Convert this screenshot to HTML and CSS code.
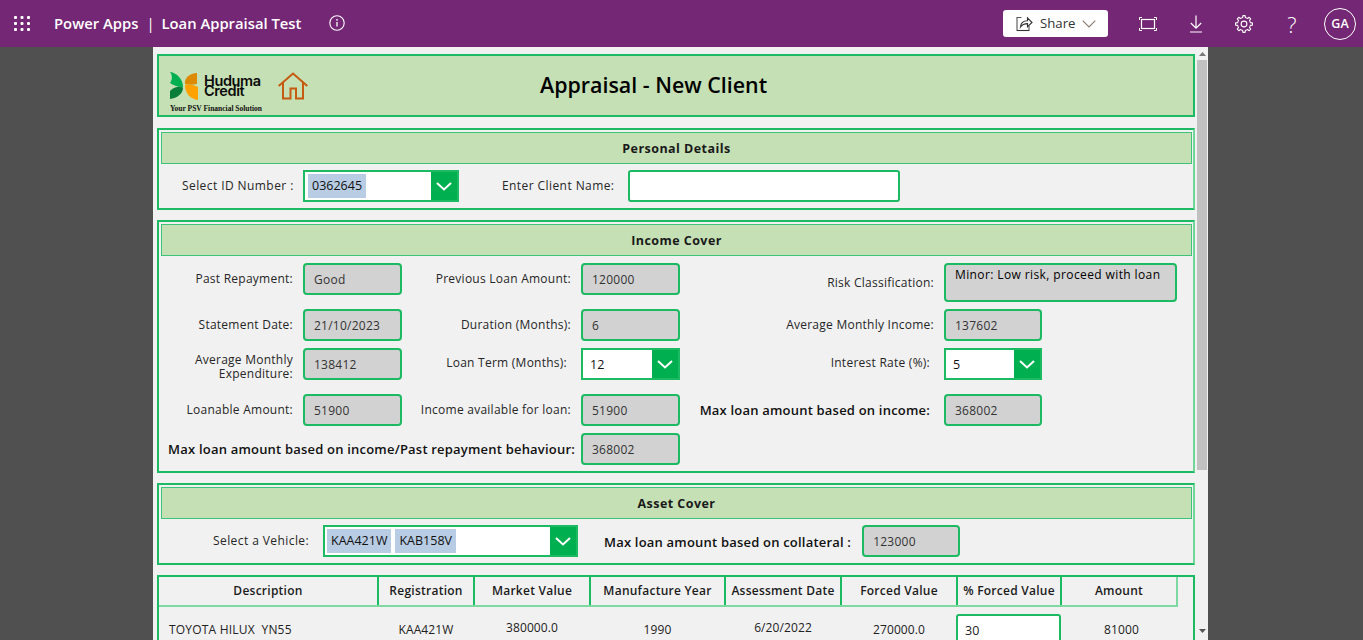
FILE: index.html
```html
<!DOCTYPE html>
<html lang="en">
<head>
<meta charset="utf-8">
<title>Loan Appraisal Test</title>
<link rel="stylesheet" href="styles.css">
</head>
<body>
<header class="topbar">
  <svg class="waffle" width="16" height="15" viewBox="0 0 16 15" fill="#fff"><rect x="0" y="0" width="3" height="3" rx="1"/><rect x="6.5" y="0" width="3" height="3" rx="1"/><rect x="13" y="0" width="3" height="3" rx="1"/><rect x="0" y="6" width="3" height="3" rx="1"/><rect x="6.5" y="6" width="3" height="3" rx="1"/><rect x="13" y="6" width="3" height="3" rx="1"/><rect x="0" y="12" width="3" height="3" rx="1"/><rect x="6.5" y="12" width="3" height="3" rx="1"/><rect x="13" y="12" width="3" height="3" rx="1"/></svg>
  <span class="brand">Power Apps</span>
  <span class="brand sep">|</span>
  <span class="brand">Loan Appraisal Test</span>
  <svg class="info" width="16" height="16" viewBox="0 0 16 16" fill="none" stroke="#fff"><circle cx="8" cy="8" r="7.2" stroke-width="1.1"/><path d="M8 7v4.500" stroke-width="1.3"/><circle cx="8" cy="4.800" r=".9" fill="#fff" stroke="none"/></svg>
  <div class="top-actions">
    <button class="share">
      <svg width="17" height="16" viewBox="0 0 17 16" fill="none" stroke-width="1.1"><path d="M5.500 1.500H1v13h12V10" stroke="#555"/><path d="M1 14.500h12" stroke="#333"/><path d="M4.500 11c.3-4 3-6.200 7-6.200V1.800L16 6.500l-4.500 4.200V7.600c-3 0-5.300 1-7 3.400z" stroke="#333"/></svg>
      <span>Share</span>
      <svg width="14" height="8" viewBox="0 0 14 8" fill="none" stroke="#8a7a70" stroke-width="1.1"><path d="M.7.7 7 7 13.300.7"/></svg>
    </button>
    <svg class="act" width="18" height="14" viewBox="0 0 18 14" fill="none" stroke="#fff"><rect x="2.500" y="2.500" width="13" height="9" stroke-width="1.2"/><path d="M.5 3V.5H3M15 .5h2.500V3M.5 11v2.500H3M15 13.500h2.500V11" stroke-width="1"/></svg>
    <svg class="act" width="14" height="18" viewBox="0 0 14 18" fill="none" stroke="#fff" stroke-width="1.2"><path d="M7 .5v12.500M1.800 8 7 13.200 12.200 8M1 17h12"/></svg>
    <svg class="act act-gear" width="18" height="18" viewBox="0 0 18 18" fill="none" stroke="#fff" stroke-width="1.1" stroke-linejoin="round"><g id="gear-teeth"><path d="M6.550 3.090 7.600 2.600 7.900.6h2.200l.3 2 1.050.49"/><path transform="rotate(45 9 9)" d="M6.550 3.090 7.600 2.600 7.900.6h2.200l.3 2 1.050.49"/><path transform="rotate(90 9 9)" d="M6.550 3.090 7.600 2.600 7.900.6h2.200l.3 2 1.050.49"/><path transform="rotate(135 9 9)" d="M6.550 3.090 7.600 2.600 7.900.6h2.200l.3 2 1.050.49"/><path transform="rotate(180 9 9)" d="M6.550 3.090 7.600 2.600 7.900.6h2.200l.3 2 1.050.49"/><path transform="rotate(225 9 9)" d="M6.550 3.090 7.600 2.600 7.900.6h2.200l.3 2 1.050.49"/><path transform="rotate(270 9 9)" d="M6.550 3.090 7.600 2.600 7.900.6h2.200l.3 2 1.050.49"/><path transform="rotate(315 9 9)" d="M6.550 3.090 7.600 2.600 7.900.6h2.200l.3 2 1.050.49"/></g><circle cx="9" cy="9" r="2.900"/></svg>
    <span class="help">?</span>
    <span class="avatar">GA</span>
  </div>
</header>

<div class="stage">
  <main class="canvas">
    <div class="content">
      <section class="banner">
        <div class="logo">
          <div class="logo-main">
            <svg width="29" height="28" viewBox="0 0 29 28"><path fill="#00b050" d="M0 0C7 1 13 7 13 15 7 15 3 13 0 11 2.500 8 2.500 3 0 0z"/><path fill="#0a7d3a" d="M0 27v-8C4 15 9 14 13 15.500 13 22 7 26 0 27z"/><path fill="#dc8a00" d="M27 1v11c-5 1-9 1-12 0C14 6 20 1 27 1z"/><path fill="#ffa200" d="M15 13c5-1 9 0 13 2v13c-8-1-13-7-13-15z"/></svg>
            <div class="logo-word">Huduma<br>Credit</div>
          </div>
          <div class="logo-tag">Your PSV Financial Solution</div>
        </div>
        <svg class="home" width="30" height="28" viewBox="0 0 30 28" fill="none" stroke="#c55a11" stroke-width="2"><path d="M.7 14 15 1.500 29.300 14M5 10.500V26.500h7.500V16.500h5.500v10h7V10.500"/></svg>
        <h1 class="banner-title">Appraisal - New Client</h1>
      </section>

      <section class="panel panel-personal">
        <div class="band">Personal Details</div>
        <div class="form-row">
          <label class="lbl lbl-id">Select ID Number :</label>
          <div class="combo combo-id"><div class="combo-val"><span class="chip">0362645</span></div><span class="chev"><svg width="16" height="9" viewBox="0 0 16 9" fill="none" stroke="#fff" stroke-width="2"><path d="M1 1l7 6.500L15 1"/></svg></span></div>
          <label class="lbl lbl-name">Enter Client Name:</label>
          <div class="text-input name-input"></div>
        </div>
      </section>

      <section class="panel panel-income">
        <div class="band">Income Cover</div>
        <div class="income-grid">
          <label class="lbl cell-lbl up">Past Repayment:</label>
          <div class="ro up">Good</div>
          <label class="lbl cell-lbl up">Previous Loan Amount:</label>
          <div class="ro up">120000</div>
          <label class="lbl cell-lbl">Risk Classification:</label>
          <div class="ro risk">Minor: Low risk, proceed with loan</div>

          <label class="lbl cell-lbl">Statement Date:</label>
          <div class="ro">21/10/2023</div>
          <label class="lbl cell-lbl">Duration (Months):</label>
          <div class="ro">6</div>
          <label class="lbl cell-lbl">Average Monthly Income:</label>
          <div class="ro narrow">137602</div>

          <label class="lbl cell-lbl two">Average Monthly Expenditure:</label>
          <div class="ro">138412</div>
          <label class="lbl cell-lbl pad-14 raise">Loan Term (Months):</label>
          <div class="combo combo-sm"><div class="combo-val num">12</div><span class="chev"><svg width="16" height="9" viewBox="0 0 16 9" fill="none" stroke="#fff" stroke-width="2"><path d="M1 1l7 6.500L15 1"/></svg></span></div>
          <label class="lbl cell-lbl pad-14 raise">Interest Rate (%):</label>
          <div class="combo combo-sm narrow"><div class="combo-val num">5</div><span class="chev"><svg width="16" height="9" viewBox="0 0 16 9" fill="none" stroke="#fff" stroke-width="2"><path d="M1 1l7 6.500L15 1"/></svg></span></div>

          <label class="lbl cell-lbl low">Loanable Amount:</label>
          <div class="ro low">51900</div>
          <label class="lbl cell-lbl low">Income available for loan:</label>
          <div class="ro low">51900</div>
          <label class="lbl cell-lbl low strong pad-14">Max loan amount based on income:</label>
          <div class="ro low narrow">368002</div>

          <label class="lbl cell-lbl strong wide">Max loan amount based on income/Past repayment behaviour:</label>
          <div class="ro">368002</div>
        </div>
      </section>

      <section class="panel panel-asset">
        <div class="band">Asset Cover</div>
        <div class="form-row">
          <label class="lbl lbl-veh">Select a Vehicle:</label>
          <div class="combo combo-veh"><div class="combo-val"><span class="chip">KAA421W</span><span class="chip">KAB158V</span></div><span class="chev"><svg width="16" height="9" viewBox="0 0 16 9" fill="none" stroke="#fff" stroke-width="2"><path d="M1 1l7 6.500L15 1"/></svg></span></div>
          <label class="lbl strong lbl-coll">Max loan amount based on collateral :</label>
          <div class="ro coll">123000</div>
        </div>
      </section>

      <section class="table">
        <div class="thead">
          <div class="th">Description</div>
          <div class="th">Registration</div>
          <div class="th">Market Value</div>
          <div class="th">Manufacture Year</div>
          <div class="th">Assessment Date</div>
          <div class="th">Forced Value</div>
          <div class="th">% Forced Value</div>
          <div class="th">Amount</div>
        </div>
        <div class="trow">
          <div class="td td-desc">TOYOTA HILUX&nbsp; YN55</div>
          <div class="td">KAA421W</div>
          <div class="td td-up">380000.0</div>
          <div class="td">1990</div>
          <div class="td td-up">6/20/2022</div>
          <div class="td">270000.0</div>
          <div class="td td-input"><div class="text-input pct">30</div></div>
          <div class="td td-last">81000</div>
        </div>
      </section>
    </div>
    <div class="scrollbar">
      <svg class="arrow" width="7" height="4" viewBox="0 0 7 4" fill="#777"><path d="M3.500 0 7 4H0z"/></svg>
      <div class="thumb"></div>
      <svg class="arrow arrow-down" width="7" height="4" viewBox="0 0 7 4" fill="#555"><path d="M3.500 4 7 0H0z"/></svg>
    </div>
  </main>
</div>
</body>
</html>
```
FILE: styles.css
```css
* { box-sizing: border-box; }
html, body { margin: 0; height: 640px; overflow: hidden; }
body { display: flex; flex-direction: column; background: #505050; font-family: "Open Sans", sans-serif; color: #1c1c1c; }

.topbar { flex: 0 0 47px; height: 47px; background: #742774; display: flex; align-items: center; padding-left: 14px; color: #fff; }
.waffle { margin-right: 24px; }
.brand { font-size: 14.800px; font-weight: 600; white-space: nowrap; line-height: 20px; margin-top: -2px; }
.sep { margin: -2px 7px 0 8px; font-weight: 400; }
.info { margin-left: 28px; margin-top: -2px; }
.top-actions { margin-left: auto; display: flex; align-items: center; padding-right: 7px; }
.share { width: 105px; height: 27px; margin-right: 31px; background: #fff; border: 0; border-radius: 3px; display: flex; align-items: center; padding: 0 0 0 13px; font: 400 13.200px "Open Sans", sans-serif; color: #333; }
.share span { margin: -2px 7px 0 7px; }
.act { margin-right: 32px; flex: none; }
.act-gear { margin-right: 30px; }
.help { width: 18px; margin-right: 23px; font-size: 22px; font-weight: 300; text-align: center; color: #fff; line-height: 1; }
.avatar { width: 32px; height: 32px; border: 1px solid #fff; border-radius: 50%; display: flex; align-items: center; justify-content: center; font-size: 12.500px; font-weight: 600; }

.stage { flex: 1; min-height: 0; padding-left: 153px; }
.canvas { width: 1055px; height: 593px; background: #f1f1f1; display: flex; overflow: hidden; }
.content { width: 1044px; padding: 7px 0 0 4px; flex: none; }
.scrollbar { width: 10px; flex: none; display: flex; flex-direction: column; align-items: center; margin-right: 1px; }
.arrow { margin-top: 5px; flex: none; }
.thumb { width: 10px; height: 410px; margin-top: 4px; background: #c1c1c1; flex: none; }
.arrow-down { margin-top: 159px; }

.banner { height: 63px; width: 1038px; background: #c5e0b4; border: 2px solid #1cba62; display: flex; align-items: flex-start; margin-bottom: 11px; }
.logo { margin: 16px 0 0 11px; width: 92px; }
.logo-main { display: flex; align-items: center; gap: 5px; }
.logo-word { font-size: 14.500px; line-height: 10.500px; font-weight: 600; color: #0b0b0b; font-family: "Inter", sans-serif; letter-spacing: -.4px; }
.logo-tag { font: 700 7.500px/8px "Liberation Serif", serif; white-space: nowrap; margin-top: 5px; color: #111; }
.home { margin: 16px 0 0 16px; flex: none; }
.banner-title { margin: 15px 0 0 232px; flex: none; font-size: 21.400px; font-weight: 600; line-height: 28px; color: #000; }

.panel { width: 1038px; border: 2px solid #1cba62; border-right-color: #70d69a; padding: 2px; margin-bottom: 10px; }
.panel-personal { height: 82px; }
.panel-income { height: 253px; }
.panel-asset { height: 82px; }
.band { height: 32px; background: #c5e0b4; border: 1px solid #3dc47a; font-size: 12.500px; font-weight: 700; line-height: 32px; text-align: center; letter-spacing: .45px; margin-right: -1px; color: #1a1a1a; }

.lbl { font-size: 12px; letter-spacing: .25px; line-height: 14px; color: #262626; }
.strong { font-weight: 600; font-size: 13px; letter-spacing: .2px; color: #111; }

.form-row { display: flex; align-items: center; margin-top: 6px; }
.form-row .lbl:not(.strong) { letter-spacing: .42px; }
.lbl-id { margin-left: 21px; width: 111px; white-space: nowrap; }
.combo { display: flex; border: 2px solid #1cba62; background: #fff; height: 32px; flex: none; }
.combo-id { width: 156px; margin-left: 10px; }
.combo-val { flex: 1; display: flex; align-items: center; gap: 4px; padding-left: 3px; font-size: 12.500px; }
.chip { background: #b8cce4; padding: 0 4px; line-height: 24px; height: 24px; color: #111; }
.chev { width: 26px; background: #00b050; display: flex; align-items: center; justify-content: center; flex: none; }
.lbl-name { margin-left: 43px; width: 112px; white-space: nowrap; }
.text-input { border: 2px solid #1cba62; border-radius: 3px; background: #fff; }
.name-input { width: 272px; height: 32px; margin-left: 14px; }

.income-grid { display: grid; grid-template-columns: 144px 99px 179px 99px 264px 233px; grid-template-rows: 39px 32px 32px 39px 32px; row-gap: 7px; margin: 7px 0 0 -2px; }
.cell-lbl { display: flex; align-items: center; justify-content: flex-end; text-align: right; padding-right: 10px; white-space: nowrap; }
.up { align-self: start; height: 32px; }
.low { align-self: end; height: 32px; }
.two { white-space: normal; padding-left: 20px; padding-top: 6px; }
.pad-14 { padding-right: 14px; }
.raise { padding-bottom: 3px; }
.wide { grid-column: 1 / 4; padding-right: 6px; }
.ro { height: 32px; background: #d2d2d2; border: 2px solid #1cba62; border-radius: 4px; font-size: 12px; letter-spacing: .25px; display: flex; align-items: center; padding-left: 9px; color: #333; }
.narrow { width: 98px; }
.risk { height: 39px; align-items: flex-start; padding-top: 1px; color: #000; letter-spacing: .39px; }
.combo-sm { width: 99px; }
.combo-sm .combo-val { padding-left: 7px; padding-top: 1px; }
.combo-sm.narrow { width: 98px; }
.num { color: #111; }

.lbl-veh { width: 97px; margin-left: 52px; white-space: nowrap; }
.combo-veh { width: 255px; margin-left: 13px; }
.combo-veh .combo-val { padding-left: 2px; }
.lbl-coll { margin-left: 26px; padding-top: 2px; white-space: nowrap; }
.coll { width: 98px; margin-left: 11px; flex: none; }

.table { width: 1038px; height: 120px; border: 2px solid #1cba62; }
.thead, .trow { display: grid; grid-template-columns: 220px 96px 116px 135px 116px 116px 104px 114px; }
.thead { height: 30px; width: 1019px; border-bottom: 2px solid #7dd8a2; border-right: 2px solid #7dd8a2; }
.th { display: flex; align-items: center; justify-content: center; padding-bottom: 2px; font-size: 12px; font-weight: 600; letter-spacing: .25px; border-right: 2px solid #1cba62; color: #1c1c1c; }
.th:last-child { border-right: 0; }
.trow { width: 1019px; }
.td { font-size: 12px; text-align: center; padding: 15px 2px 0 0; letter-spacing: .1px; line-height: 16px; color: #222; }
.td-up { padding-top: 13px; }
.td-last { padding: 15px 0 0 5px; }
.td-desc { text-align: left; padding-left: 10px; letter-spacing: .2px; }
.td-input { padding-top: 7px; }
.pct { height: 40px; margin-left: -2px; width: 105px; padding: 7px 0 0 7px; font-size: 12.500px; line-height: 16px; text-align: left; }
```
